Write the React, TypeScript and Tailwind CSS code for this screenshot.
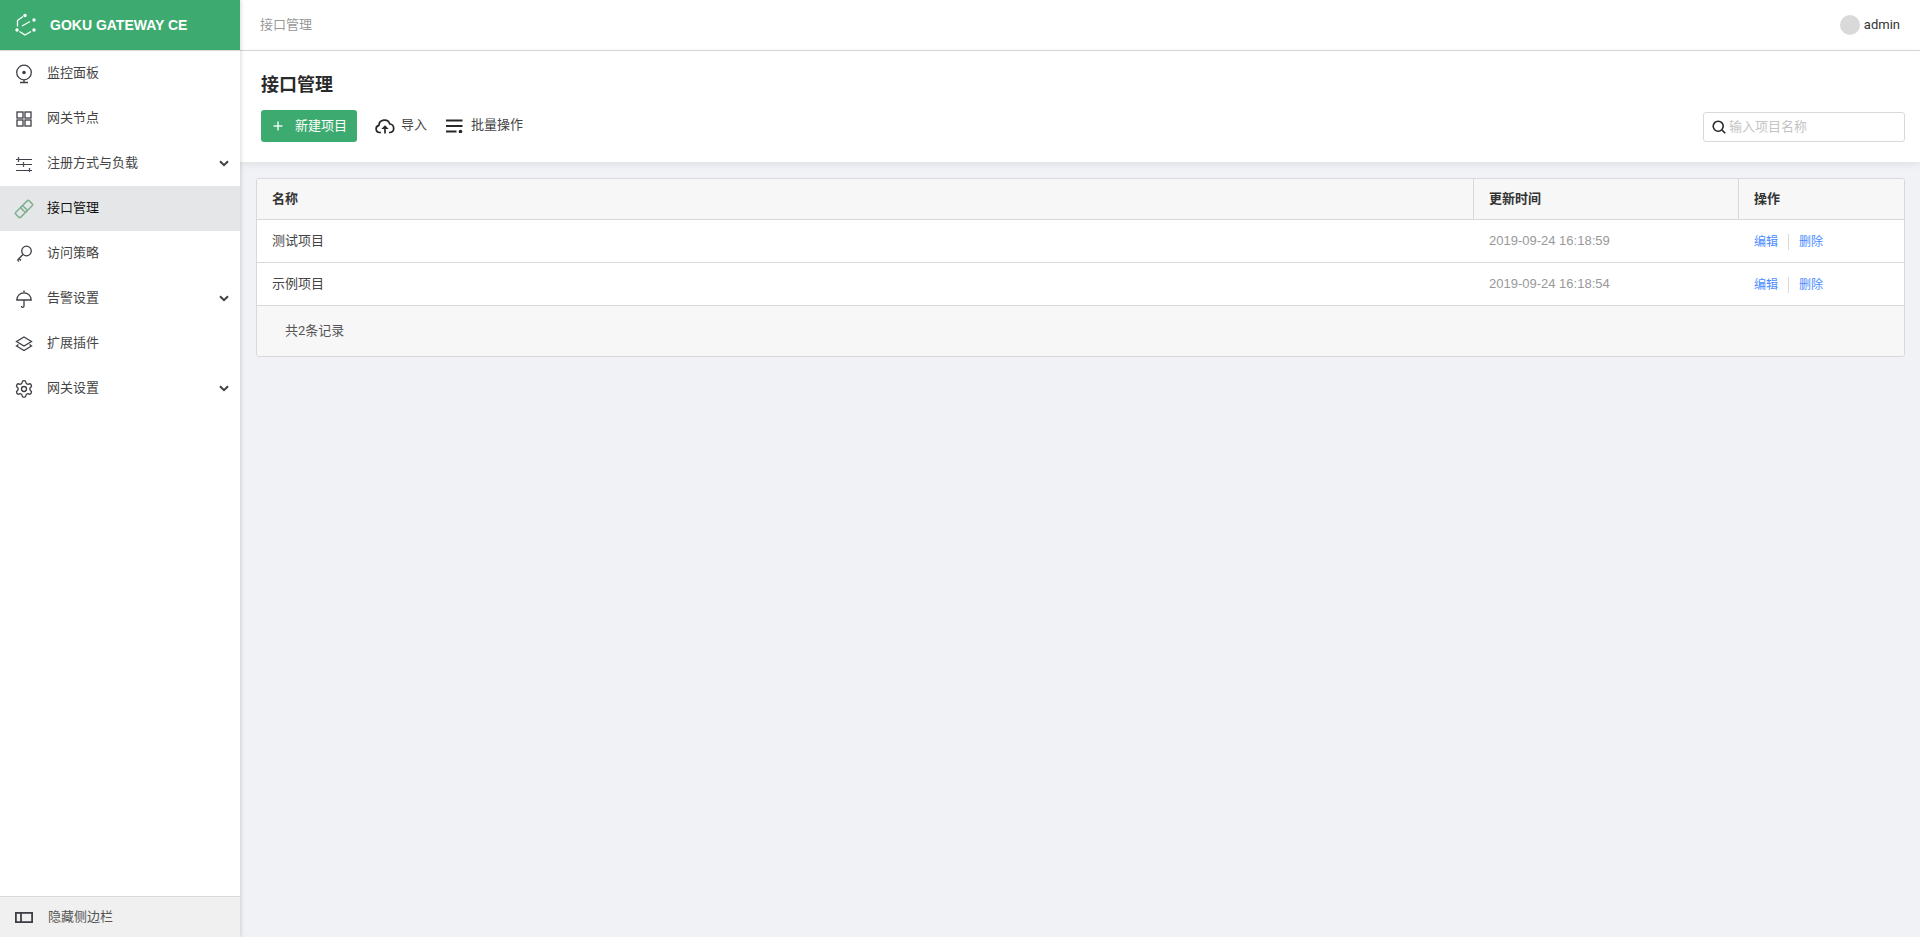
import React from "react";
import { Settings } from "lucide-react";

const S = { fill: "none", stroke: "#3f3f46", strokeWidth: 1.3 } as const;

const icons: Record<string, React.ReactNode> = {
  monitor: (
    <svg width="18" height="20" viewBox="0 0 18 20" {...S}>
      <circle cx="9" cy="8.500" r="7.300" />
      <circle cx="9" cy="8.500" r="1.800" fill="#3f3f46" stroke="none" />
      <path d="M9 16v2.500M5 18.500h8" />
    </svg>
  ),
  grid: (
    <svg width="16" height="16" viewBox="0 0 16 16" {...S}>
      <rect x="1" y="1" width="6" height="6" />
      <rect x="9" y="1" width="6" height="6" />
      <rect x="1" y="9" width="6" height="6" />
      <rect x="9" y="9" width="6" height="6" />
    </svg>
  ),
  sliders: (
    <svg width="16" height="16" viewBox="0 0 16 16" fill="none" stroke="#3f3f46" strokeWidth="1">
      <path d="M0 3.500h16M0 8.500h16M0 14.500h16" />
      <path d="M2.500 1v5M7.500 6v5M13.500 12v4" strokeWidth="1.300" stroke="#5b4a6b" />
    </svg>
  ),
  link: (
    <svg width="20" height="20" viewBox="0 0 20 20" fill="none" stroke="#7fb08f" strokeWidth="1.500">
      <g transform="rotate(-45 10 10)">
        <rect x="0.500" y="6.500" width="11" height="7" rx="1.500" />
        <rect x="8.500" y="6.500" width="11" height="7" rx="1.500" />
      </g>
    </svg>
  ),
  key: (
    <svg width="16" height="18" viewBox="0 0 16 18" {...S}>
      <circle cx="10.500" cy="6" r="4.800" />
      <path d="M7 9.500L1.500 15M3 13.500l2 2M1.500 15l1.500 1.500" />
    </svg>
  ),
  umbrella: (
    <svg width="16" height="20" viewBox="0 0 16 20" {...S}>
      <path d="M.800 11a7.200 7.200 0 0 1 14.400 0z" />
      <path d="M8 1.500v2M8 11v6a1.300 1.300 0 0 1-2.600 0" />
    </svg>
  ),
  layers: (
    <svg width="18" height="16" viewBox="0 0 18 16" {...S}>
      <path d="M9 1l7.500 4.500L9 10 1.500 5.500z" />
      <path d="M3.500 8.500L1.500 10 9 14.500l7.500-4.500-2-1.500" />
    </svg>
  ),
  gear: <Settings size={20} strokeWidth={1.600} color="#3f3f46" />,
};

const Chevron = () => (
  <svg width="10" height="7" viewBox="0 0 10 7" fill="none" stroke="#3f3f46" strokeWidth="2" className="ml-auto mr-[11px]">
    <path d="M1 1.200l4 4 4-4" />
  </svg>
);

const nav = [
  { icon: "monitor", label: "监控面板" },
  { icon: "grid", label: "网关节点" },
  { icon: "sliders", label: "注册方式与负载", more: true },
  { icon: "link", label: "接口管理", active: true },
  { icon: "key", label: "访问策略" },
  { icon: "umbrella", label: "告警设置", more: true },
  { icon: "layers", label: "扩展插件" },
  { icon: "gear", label: "网关设置", more: true },
];

const rows = [
  { name: "测试项目", time: "2019-09-24 16:18:59" },
  { name: "示例项目", time: "2019-09-24 16:18:54" },
];

const FONT = "font-['Roboto','Noto_Sans_CJK_SC',sans-serif]";

export default function App() {
  return (
    <div className={`flex h-[937px] w-[1920px] overflow-hidden bg-[#f0f2f5] text-[13px] text-[#333] ${FONT}`}>
      <aside className="relative z-20 flex w-[240px] shrink-0 flex-col bg-white shadow-[1px_0_4px_rgba(0,0,0,0.15)]">
        <div className="flex h-[50px] shrink-0 items-center bg-[#3dab6f] pl-[15px] text-white">
          <svg width="22" height="24" viewBox="0 0 22 24" fill="none" stroke="white" strokeWidth="1.300">
            <circle cx="10" cy="2.500" r="1.700" fill="white" stroke="none" />
            <circle cx="19" cy="7" r="1.700" fill="white" stroke="none" />
            <circle cx="2" cy="17" r="1.700" fill="white" stroke="none" />
            <circle cx="19" cy="17" r="1.700" fill="white" stroke="none" />
            <path d="M8 3.500L2.500 7.500v6M7 13l8-4.500M4.500 18.500L10 22l6-3.500" />
          </svg>
          <span className="ml-[13px] text-[14px] font-bold font-['Liberation_Sans',sans-serif]">GOKU GATEWAY CE</span>
        </div>
        <div className="h-px shrink-0 bg-[#d9d9d9]" />
        <nav className="flex-1">
          {nav.map((n) => (
            <div key={n.label} className={`flex h-[45px] items-center ${n.active ? "bg-[#e5e6e8] text-[#111]" : "text-[#444]"}`}>
              <span className="flex w-[47px] shrink-0 justify-center pl-[1px]">{icons[n.icon]}</span>
              <span className="pb-[2px]">{n.label}</span>
              {n.more && <Chevron />}
            </div>
          ))}
        </nav>
        <div className="flex h-[41px] shrink-0 items-center border-t border-[#d9d9d9] bg-[#f0f0f0] text-[#555]">
          <span className="flex w-[48px] justify-center">
            <svg width="18" height="11" viewBox="0 0 18 11" fill="none" stroke="#3f3f46" strokeWidth="1.800">
              <rect x="0.900" y="0.900" width="16.200" height="9.200" />
              <path d="M6 1v9" />
            </svg>
          </span>
          <span>隐藏侧边栏</span>
        </div>
      </aside>

      <main className="flex min-w-0 flex-1 flex-col">
        <header className="flex h-[51px] shrink-0 items-center justify-between border-b border-[#d9d9d9] bg-white pl-[20px] pr-[20px]">
          <span className="text-[#999]">接口管理</span>
          <div className="flex items-center gap-[4px]">
            <span className="h-[20px] w-[20px] rounded-full bg-[#d9d9d9]" />
            <span className="text-[#333]">admin</span>
          </div>
        </header>

        <section className="relative z-10 h-[111px] shrink-0 bg-white pl-[21px] pr-[15px] shadow-[0_2px_8px_rgba(0,0,0,0.08)]">
          <h1 className="pt-[20px] text-[18px] font-bold leading-[27px] text-[#2a2a2a]">接口管理</h1>
          <div className="mt-[12px] flex items-center">
            <button className="flex h-[32px] w-[96px] items-center rounded-[3px] bg-[#3dab6f] pl-[11px] text-white">
              <svg width="12" height="12" viewBox="0 0 12 12" stroke="white" strokeWidth="1.500" className="opacity-90">
                <path d="M6 1.500v9M1.500 6h9" />
              </svg>
              <span className="ml-[11px]">新建项目</span>
            </button>
            <div className="ml-[18px] flex items-center">
              <svg width="20" height="16" viewBox="0 0 20 16" fill="none" stroke="#27272a" strokeWidth="1.700">
                <path d="M6 14.500H4.500a3.600 3.600 0 0 1-.6-7.100A5.600 5.600 0 0 1 14.800 6a4.300 4.300 0 0 1 .4 8.500H14" />
                <path d="M10 15.500V9" />
                <path d="M6.300 11L10 7.200l3.700 3.800z" fill="#27272a" stroke="none" />
              </svg>
              <span className="ml-[6px] pb-[2px] text-[#444]">导入</span>
            </div>
            <div className="ml-[19px] flex items-center">
              <svg width="17" height="14" viewBox="0 0 17 14" fill="none" stroke="#27272a" strokeWidth="1.800">
                <path d="M0 1.500h16.500M0 7h16.500M0 12.500h10.500" />
                <circle cx="14.500" cy="12.500" r="1.800" fill="#27272a" stroke="none" />
              </svg>
              <span className="ml-[8px] pb-[2px] text-[#444]">批量操作</span>
            </div>
            <div className="ml-auto mt-[2px] flex h-[30px] w-[202px] items-center rounded-[3px] border border-[#d9d9d9] bg-white pl-[8px]">
              <svg width="14" height="14" viewBox="0 0 14 14" fill="none" stroke="#27272a" strokeWidth="1.600">
                <circle cx="6.200" cy="6.200" r="5" />
                <path d="M10 10l3.200 3.200" />
              </svg>
              <span className="ml-[3px] text-[#c4c4c4]">输入项目名称</span>
            </div>
          </div>
        </section>

        <div className="pl-[16px] pr-[15px] pt-[16px]">
          <div className="overflow-hidden rounded-[3px] border border-[#d9d9d9]">
            <div className="flex h-[41px] items-center border-b border-[#d9d9d9] bg-[#f7f7f7] font-bold text-[#333]">
              <div className="flex h-full w-[1217px] items-center border-r border-[#d9d9d9] pl-[15px]">名称</div>
              <div className="flex h-full w-[265px] items-center border-r border-[#d9d9d9] pl-[15px]">更新时间</div>
              <div className="flex h-full flex-1 items-center pl-[15px]">操作</div>
            </div>
            {rows.map((r) => (
              <div key={r.name} className="flex h-[43px] items-center border-b border-[#d9d9d9] bg-white">
                <div className="w-[1217px] pl-[15px] text-[#444]">{r.name}</div>
                <div className="w-[265px] pb-[1px] pl-[15px] font-['Liberation_Sans',sans-serif] text-[#999]">{r.time}</div>
                <div className="flex flex-1 items-center pl-[15px] pt-[2px] text-[12px] text-[#4a8cff]">
                  <span>编辑</span>
                  <span className="mx-[10px] h-[16px] w-px bg-[#d9d9d9]" />
                  <span>删除</span>
                </div>
              </div>
            ))}
            <div className="flex h-[50px] items-center bg-[#f7f7f7] pl-[28px] text-[#555]">共2条记录</div>
          </div>
        </div>
      </main>
    </div>
  );
}
